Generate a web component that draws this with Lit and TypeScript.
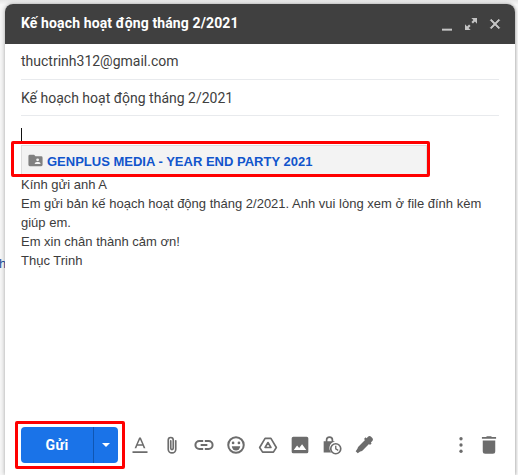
import { LitElement, html, css, svg } from "lit";
import { customElement } from "lit/decorators.js";

const icon = (p: unknown, size = 24, cls = "ic") =>
  html`<svg class=${cls} width=${size} height=${size} viewBox="0 0 24 24" fill="currentColor">${p}</svg>`;

@customElement("app-root")
export class AppRoot extends LitElement {
  static styles = css`
    :host { display: block; width: 518px; height: 475px; position: relative; overflow: hidden; background: #f5f5f5; font-family: "Liberation Sans", Arial, sans-serif; }
    .page { height: 475px; box-sizing: border-box; padding: 4px 3px 0 5px; background: linear-gradient(#e6e6e6, #f4f4f4 4px, #f7f7f7 4px); display: flex; }
    .win { flex: 1; display: flex; flex-direction: column; background: #fff; border-radius: 8px 8px 0 0; box-shadow: -1px 0 4px rgba(0,0,0,.2), 1px 0 3px rgba(0,0,0,.2); min-width: 0; position: relative; }
    .head { height: 40px; flex: none; box-sizing: border-box; padding: 0 12px 2px 16px; background: #404040; border-radius: 8px 8px 0 0; display: flex; align-items: center; color: #fff; font: 700 14px/20px Roboto, sans-serif; }
    .title { flex: 1; letter-spacing: .12px; }
    .hicons { display: flex; gap: 8px; color: #c4c4c4; align-items: center; margin-top: 2px; }
    .rows { padding: 0 16px; flex: none; }
    .row { height: 35px; border-bottom: 1px solid #e8eaed; display: flex; align-items: center; font: 400 14px/20px Roboto, sans-serif; color: #404040; }
    .row.first { padding-bottom: 2px; height: 33px; }
    .body { flex: 1; padding: 0 16px; font-size: 13px; line-height: 19px; color: #3c3c3c; min-height: 0; }
    .caret { width: 1px; height: 15px; background: #111; margin-top: 12px; }
    .chip { margin-top: 2px; height: 30px; width: 406px; box-sizing: border-box; background: #f3f3f3; border: 1px solid #ddd; display: flex; align-items: center; gap: 3px; padding: 2px 0 0 5px; color: #1155cc; font: 700 13px/1 "Liberation Sans", Arial, sans-serif; }
    .chip svg { color: #808080; flex: none; margin-top: -1px; }
    .text div { white-space: nowrap; }
    .bar { height: 36px; flex: none; display: flex; align-items: center; padding: 0 16px 12px 16px; color: #6c6c6c; }
    .send { width: 97px; height: 36px; background: #1a73e8; border-radius: 4px; display: flex; color: #fff; flex: none; }
    .send .l { flex: 1; display: flex; align-items: center; justify-content: center; font: 700 14px Roboto, sans-serif; letter-spacing: .5px; }
    .send .r { width: 24px; border-left: 1px solid #0f56b3; display: flex; align-items: center; justify-content: center; }
    .tri { width: 0; height: 0; border-left: 4px solid transparent; border-right: 4px solid transparent; border-top: 4px solid #fff; }
    .tools { display: flex; align-items: center; gap: 12px; margin-left: 12px; }
    .spacer { flex: 1; }
    .more { display: flex; align-items: center; gap: 8px; }
    .ic { display: block; flex: none; }
    .box { position: absolute; border: 3px solid #f00; box-sizing: border-box; border-radius: 2px; pointer-events: none; }
    .b1 { left: 11px; top: 141px; width: 419px; height: 36px; }
    .b2 { left: 15px; top: 421px; width: 110px; height: 48px; }
    .stray { position: absolute; left: -1px; top: 256px; font-size: 13px; color: #1a4f9c; }
  `;

  render() {
    return html`
      <div class="stray">h</div>
      <div class="page">
        <div class="win">
          <div class="head">
            <div class="title">Kế hoạch hoạt động tháng 2/2021</div>
            <div class="hicons">
              ${icon(svg`<rect x="4.500" y="19" width="15" height="3"/>`, 16)}
              ${icon(svg`<path d="M12.500 3h8.500v8.500l-3.100-3.100-3 3-2.300-2.300 3-3zM11.500 21H3v-8.500l3.100 3.100 3-3 2.300 2.300-3 3z"/>`, 16)}
              ${icon(svg`<path d="M19 6.400 17.600 5 12 10.600 6.400 5 5 6.400 10.600 12 5 17.600 6.400 19 12 13.400 17.600 19 19 17.600 13.400 12z" stroke="currentColor" stroke-width="1.200"/>`, 16)}
            </div>
          </div>
          <div class="rows">
            <div class="row first">thuctrinh312@gmail.com</div>
            <div class="row">Kế hoạch hoạt động tháng 2/2021</div>
          </div>
          <div class="body">
            <div class="caret"></div>
            <div class="chip">
              ${icon(svg`<path fill-rule="evenodd" d="M10 4H4a2 2 0 0 0-2 2v12a2 2 0 0 0 2 2h16a2 2 0 0 0 2-2V8a2 2 0 0 0-2-2h-8zm5 5a2 2 0 1 1 0 4 2 2 0 0 1 0-4zm4 8h-8v-1c0-1.300 2.700-2 4-2s4 .700 4 2z"/>`, 17)}
              <span>GENPLUS MEDIA - YEAR END PARTY 2021</span>
            </div>
            <div class="text">
              <div>Kính gửi anh A</div>
              <div>Em gửi bản kế hoạch hoạt động tháng 2/2021. Anh vui lòng xem ở file đính kèm</div>
              <div>giúp em.</div>
              <div>Em xin chân thành cảm ơn!</div>
              <div>Thục Trinh</div>
            </div>
          </div>
          <div class="bar">
            <div class="send">
              <div class="l">Gửi</div>
              <div class="r"><div class="tri"></div></div>
            </div>
            <div class="tools">
              ${icon(svg`<path d="M11 3h2l5.500 13h-2.100l-1.100-3H8.700l-1.100 3H5.500zm-1.600 8h5.200L12 5.500zM3 19.500h18v2H3z"/>`, 20)}
              ${icon(svg`<path fill="none" stroke="currentColor" stroke-width="2" stroke-linecap="round" d="M16.500 7v10a4.500 4.500 0 0 1-9 0V6a3 3 0 0 1 6 0v10a1.500 1.500 0 0 1-3 0V7"/>`, 20)}
              ${icon(svg`<path d="M2.900 12A3.600 3.600 0 0 1 6.500 8.400H11V6H6.500a6 6 0 0 0 0 12H11v-2.400H6.500A3.600 3.600 0 0 1 2.900 12zM8 13.200h8v-2.400H8zM17.500 6H13v2.400h4.500a3.600 3.600 0 0 1 0 7.200H13V18h4.500a6 6 0 0 0 0-12z"/>`, 20)}
              ${icon(svg`<path fill-rule="evenodd" d="M12 1.500a10.500 10.500 0 1 0 0 21 10.500 10.500 0 0 0 0-21zm0 18.600a8.100 8.100 0 1 1 0-16.200 8.100 8.100 0 0 1 0 16.200z"/><circle cx="8.500" cy="9.500" r="1.600"/><circle cx="15.500" cy="9.500" r="1.600"/><path d="M7 13.500h10a5 5 0 0 1-10 0z"/>`, 20)}
              ${icon(svg`<path fill="none" stroke="currentColor" stroke-width="2" stroke-linejoin="round" d="M8.500 4h7l6.500 11-3.500 5.500h-13L2 15z"/><path fill="none" stroke="currentColor" stroke-width="2" stroke-linejoin="round" d="M12 9l3.500 6h-7z"/>`, 20)}
              ${icon(svg`<path fill-rule="evenodd" d="M22 20V4a2 2 0 0 0-2-2H4a2 2 0 0 0-2 2v16a2 2 0 0 0 2 2h16a2 2 0 0 0 2-2zM8.500 12.500l2.500 3 3.500-4.500 5 7H4.500z"/>`, 20)}
              ${icon(svg`<path d="M9 1.500a4.500 4.500 0 0 0-4.500 4.500v1.500H2V21h9.500A7.500 7.500 0 0 1 15 8V7.500h-1.500V6A4.500 4.500 0 0 0 9 1.500zm0 2A2.500 2.500 0 0 1 11.500 6v1.500h-5V6A2.500 2.500 0 0 1 9 3.500z"/><path fill-rule="evenodd" d="M16.500 9.500a7 7 0 1 0 0 14 7 7 0 0 0 0-14zm0 2a5 5 0 1 1 0 10 5 5 0 0 1 0-10z"/><path d="M15.700 12.800h1.600v3.500l2.600 1.500-.8 1.300-3.400-2z"/>`, 20)}
              ${icon(svg`<path d="M16.800 2 15 3.800l-1-1-2 2 1.200 1.200-8 8c-.6.6-.9 1.600-1.100 2.600L2 19.500 4.500 22l2.900-2.100c1-.2 2-.5 2.600-1.100l8-8 1.200 1.200 2-2-1-1L22 7.200c1-1 1-2.700 0-3.700l-1.500-1.500c-1-1-2.700-1-3.700 0z"/>`, 20)}
            </div>
            <div class="spacer"></div>
            <div class="more">
              ${icon(svg`<circle cx="12" cy="4.500" r="2"/><circle cx="12" cy="12" r="2"/><circle cx="12" cy="19.500" r="2"/>`, 20)}
              ${icon(svg`<path d="M15.500 2.500 14.500 1.500h-5l-1 1H3.500v2h17v-2zM4.500 6.500V19.500a3 3 0 0 0 3 3h9a3 3 0 0 0 3-3V6.500z"/>`, 20)}
            </div>
          </div>
        </div>
      </div>
      <div class="box b1"></div>
      <div class="box b2"></div>
    `;
  }
}
